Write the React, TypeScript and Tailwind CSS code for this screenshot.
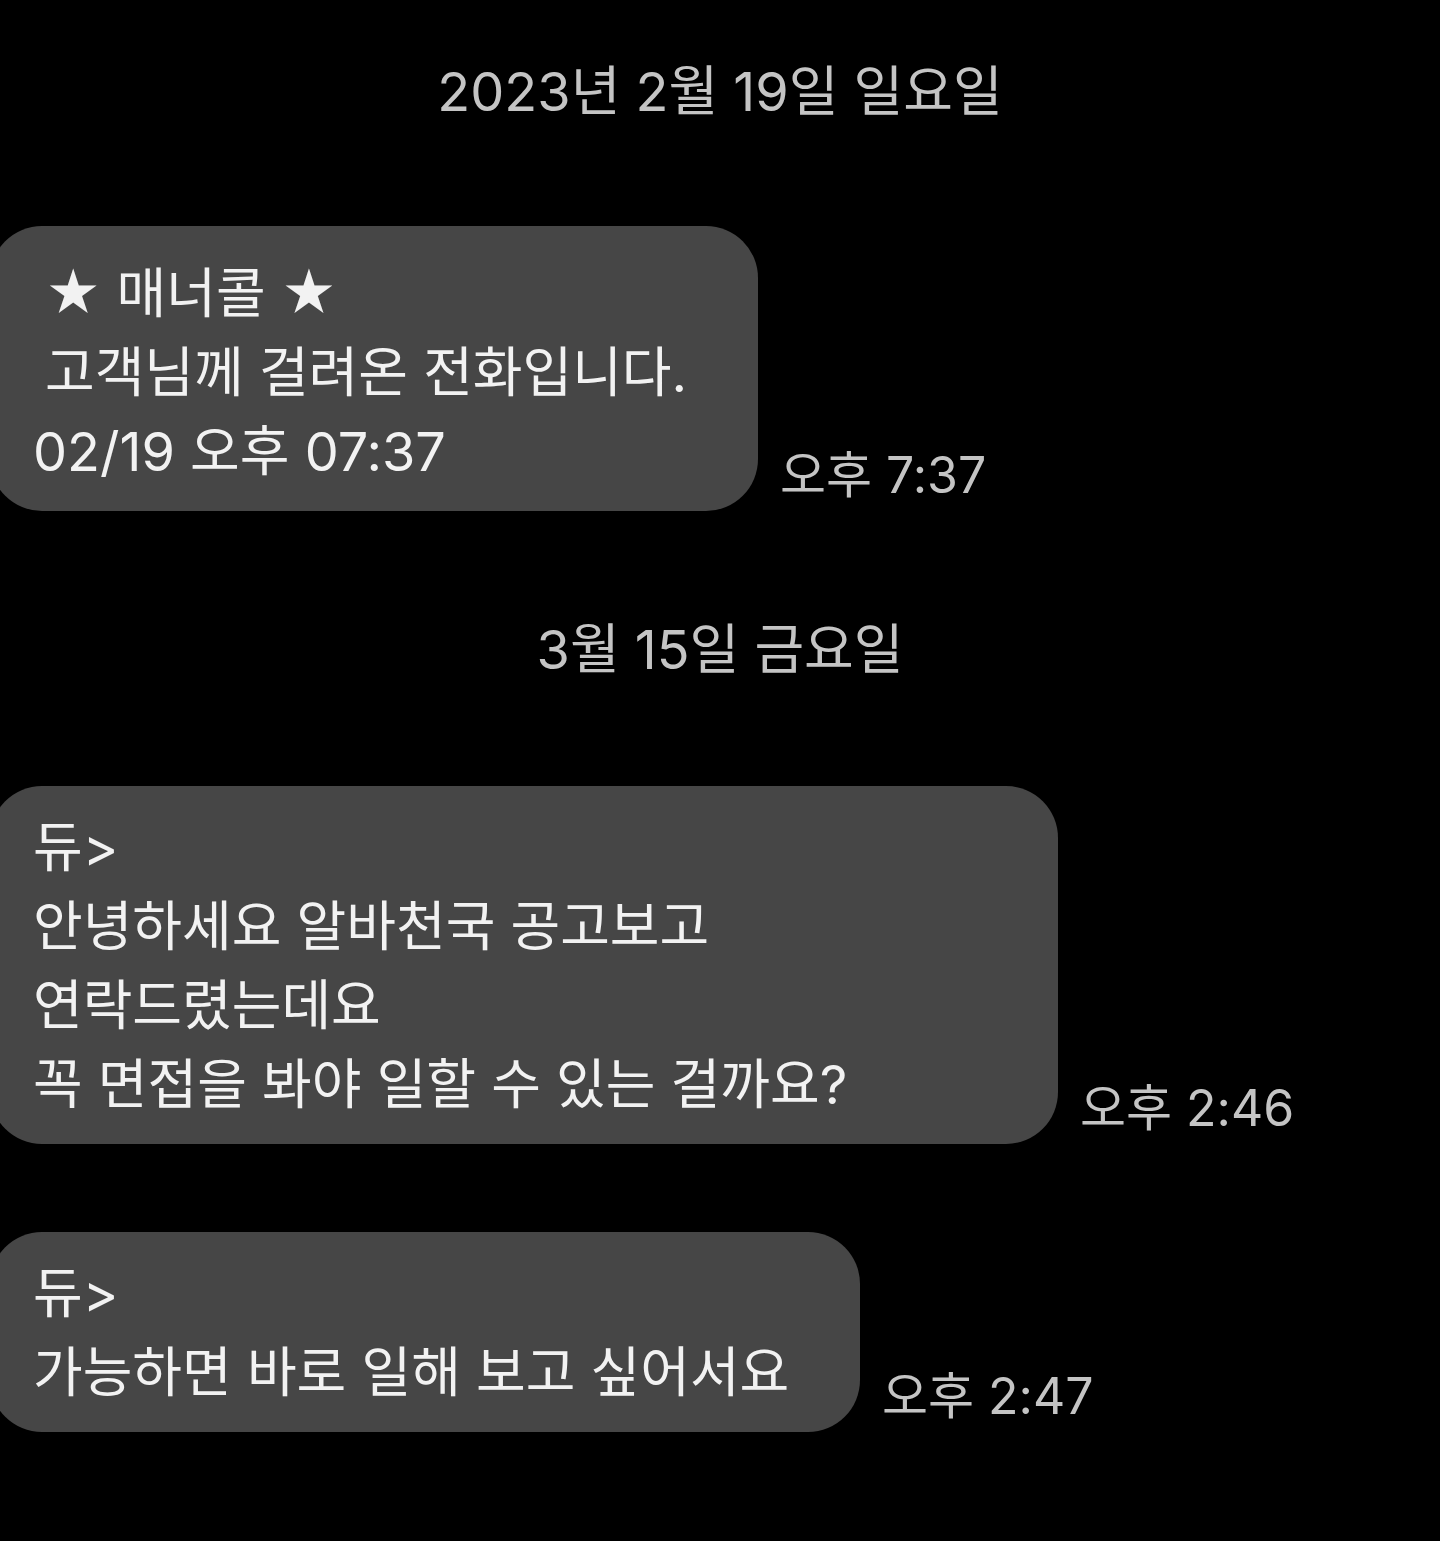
const font = { fontFamily: 'Inter, "Noto Sans CJK KR", sans-serif' };

function DateHeader({ label, className }: { label: string; className?: string }) {
  return (
    <div className={`text-center text-[54px] leading-[64px] text-[#c4c4c4] ${className ?? ""}`}>
      {label}
    </div>
  );
}

function Bubble({
  lines,
  time,
  width,
  pad,
  className,
}: {
  lines: { text: string; indent?: boolean }[];
  time: string;
  width: string;
  pad: string;
  className?: string;
}) {
  return (
    <div className={`flex items-end gap-[22px] ${className ?? ""}`}>
      <div className={`-ml-[10px] ${width} ${pad} rounded-[52px] bg-[#464646] pl-[43px] text-[#f2f2f2]`}>
        {lines.map((l, i) => (
          <div key={i} className={`text-[54px] leading-[79px] whitespace-nowrap ${l.indent ? "pl-[12px]" : ""}`}>
            {l.text}
          </div>
        ))}
      </div>
      <div className="mb-[9px] text-[50px] leading-[54px] whitespace-nowrap text-[#c4c4c4]">{time}</div>
    </div>
  );
}

export default function App() {
  return (
    <div className="min-h-[1541px] w-full overflow-hidden bg-black" style={font}>
      {/* 첫 날 */}
      <DateHeader label="2023년 2월 19일 일요일" className="pt-[60px]" />

      <Bubble
        className="mt-[102px]"
        width="w-[768px]"
        pad="pt-[28px] pb-[20px]"
        lines={[
          { text: "★ 매너콜 ★", indent: true },
          { text: "고객님께 걸려온 전화입니다.", indent: true },
          { text: "02/19 오후 07:37" },
        ]}
        time="오후 7:37"
      />

      {/* 둘째 날 */}
      <DateHeader label="3월 15일 금요일" className="mt-[107px]" />

      <Bubble
        className="mt-[104px]"
        width="w-[1068px]"
        pad="pt-[22px] pb-[20px]"
        lines={[
          { text: "듀>" },
          { text: "안녕하세요 알바천국 공고보고" },
          { text: "연락드렸는데요" },
          { text: "꼭 면접을 봐야 일할 수 있는 걸까요?" },
        ]}
        time="오후 2:46"
      />

      <Bubble
        className="mt-[88px]"
        width="w-[870px]"
        pad="pt-[22px] pb-[20px]"
        lines={[{ text: "듀>" }, { text: "가능하면 바로 일해 보고 싶어서요" }]}
        time="오후 2:47"
      />
    </div>
  );
}
